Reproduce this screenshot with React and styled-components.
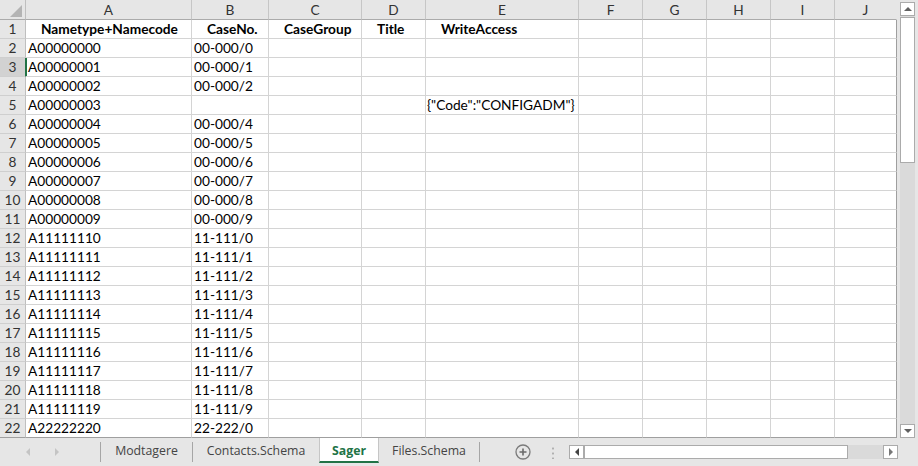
import React from 'react';
import styled, { createGlobalStyle } from 'styled-components';

const GlobalStyle = createGlobalStyle`
  body {
    margin: 0;
    background: #e6e6e6;
    overflow: hidden;
  }
`;

const COLS = [26, 166, 77, 93, 64, 153, 64, 64, 64, 64, 62];
const LETTERS = ['A', 'B', 'C', 'D', 'E', 'F', 'G', 'H', 'I', 'J'];

const HEADERS = ['Nametype+Namecode', 'CaseNo.', 'CaseGroup', 'Title', 'WriteAccess'];

const buildRows = () => {
  const rows = [];
  for (let i = 0; i < 10; i++) {
    rows.push({ a: `A0000000${i}`, b: i === 3 ? '' : `00-000/${i}`, e: i === 3 ? '{"Code":"CONFIGADM"}' : '' });
  }
  for (let i = 0; i < 10; i++) {
    rows.push({ a: `A1111111${i}`, b: `11-111/${i}`, e: '' });
  }
  rows.push({ a: 'A22222220', b: '22-222/0', e: '' });
  return rows;
};

const ROWS = buildRows();

const Window = styled.div`
  width: 918px;
  height: 466px;
  display: flex;
  flex-direction: column;
  background: #e6e6e6;
  overflow: hidden;
`;

const Main = styled.div`
  display: flex;
  height: 438px;
`;

const Sheet = styled.div`
  display: grid;
  grid-template-columns: ${COLS.map(c => `${c}px`).join(' ')};
  grid-template-rows: 20px repeat(22, 19px);
  background: #fff;
`;

const Corner = styled.div`
  box-sizing: border-box;
  background: #e6e6e6;
  border-right: 1px solid #bfbfbf;
  border-bottom: 1px solid #ababab;
  display: flex;
  align-items: flex-end;
  justify-content: flex-end;
  padding: 0 3px 2px 0;
`;

const ColHead = styled.div`
  box-sizing: border-box;
  background: #e6e6e6;
  border-right: 1px solid ${p => (p.$last ? '#e6e6e6' : '#c6c6c6')};
  border-bottom: 1px solid #ababab;
  font: 400 13.7px 'Lato', sans-serif;
  line-height: 19px;
  color: #333;
  text-align: center;
`;

const RowHead = styled.div`
  box-sizing: border-box;
  background: ${p => (p.$sel ? '#d2d2d2' : '#e6e6e6')};
  border-right: 1px solid ${p => (p.$sel ? '#217346' : '#bfbfbf')};
  border-bottom: 1px solid ${p => (p.$bottom ? '#9f9f9f' : '#cfcfcf')};
  font: 400 13.7px 'Lato', sans-serif;
  line-height: 18px;
  color: #333;
  text-align: center;
`;

const Cell = styled.div`
  box-sizing: border-box;
  border-right: 1px solid ${p => (p.$last ? '#9f9f9f' : '#d4d4d4')};
  border-bottom: 1px solid ${p => (p.$bottom ? '#9f9f9f' : '#d4d4d4')};
  box-shadow: ${p => (p.$sel ? 'inset 1px 0 0 #217346' : 'none')};
  padding-left: ${p => p.$indent || 2}px;
  font: ${p => (p.$bold ? 700 : 400)} 13.7px 'Lato', sans-serif;
  line-height: 18px;
  color: #000;
  white-space: nowrap;
`;

const VScroll = styled.div`
  width: 21px;
  box-sizing: border-box;
  padding: 2px 3px 0 3px;
  display: flex;
  flex-direction: column;
`;

const Track = styled.div`
  flex: 1;
  display: flex;
  flex-direction: ${p => (p.$horizontal ? 'row' : 'column')};
  background: #dadada;
`;

const ScrollButton = styled.div`
  box-sizing: border-box;
  width: ${p => (p.$horizontal ? '15px' : '100%')};
  height: ${p => (p.$horizontal ? '100%' : '14px')};
  background: #fff;
  border: 1px solid #ababab;
  display: flex;
  align-items: center;
  justify-content: center;
`;

const Thumb = styled.div`
  box-sizing: border-box;
  background: #fff;
  border: 1px solid #ababab;
  ${p => (p.$horizontal ? 'width: 264px; height: 100%;' : 'height: 146px; margin-top: 1px;')}
`;

const Spacer = styled.div`
  flex: 1;
`;

const Arrow = styled.span`
  width: 0;
  height: 0;
  border-style: solid;
  border-color: transparent;
  ${p => {
    const c = p.$color || '#606060';
    const s = p.$size || 4;
    switch (p.$dir) {
      case 'up':
        return `border-width: 0 ${s}px ${s}px ${s}px; border-bottom-color: ${c};`;
      case 'down':
        return `border-width: ${s}px ${s}px 0 ${s}px; border-top-color: ${c};`;
      case 'left':
        return `border-width: ${s}px ${s}px ${s}px 0; border-right-color: ${c};`;
      default:
        return `border-width: ${s}px 0 ${s}px ${s}px; border-left-color: ${c};`;
    }
  }}
`;

const TabBar = styled.div`
  height: 28px;
  display: flex;
  align-items: flex-start;
  background: #e6e6e6;
`;

const Nav = styled.div`
  width: 100px;
  height: 28px;
  display: flex;
  align-items: center;
  padding-left: 26px;
  gap: 25px;
  box-sizing: border-box;
`;

const Separator = styled.div`
  width: 1px;
  height: 20px;
  margin-top: 4px;
  background: #a6a6a6;
`;

const Tab = styled.div`
  box-sizing: border-box;
  width: ${p => p.$w}px;
  height: 25px;
  padding-top: 2px;
  text-align: center;
  font: ${p => (p.$active ? 700 : 400)} 12.3px 'Open Sans', sans-serif;
  line-height: 21px;
  color: ${p => (p.$active ? '#217346' : '#444')};
  background: ${p => (p.$active ? '#fff' : 'transparent')};
  border-left: ${p => (p.$active ? '1px solid #c6c6c6' : 'none')};
  border-right: ${p => (p.$active ? '1px solid #c6c6c6' : 'none')};
  border-bottom: 2px solid ${p => (p.$active ? '#217346' : 'transparent')};
`;

const AddButton = styled.div`
  margin: 6px 0 0 35px;
  width: 16px;
  height: 16px;
`;

const Dots = styled.div`
  margin: 8px 0 0 21px;
  width: 2px;
  height: 13px;
  background: radial-gradient(circle, #b0b0b0 1px, transparent 1.2px) 0 0 / 2px 5px repeat-y;
`;

const HScroll = styled.div`
  width: 329px;
  height: 14px;
  margin: 7px 0 0 15px;
  display: flex;
`;

const AddIcon = () => (
  <svg width="16" height="16" viewBox="0 0 16 16">
    <circle cx="8" cy="8" r="7" fill="none" stroke="#7a7a7a" strokeWidth="1.3" />
    <path d="M8 4.5v7M4.5 8h7" stroke="#6a6a6a" strokeWidth="1.6" />
  </svg>
);

const CornerMark = () => (
  <svg width="12" height="12" viewBox="0 0 12 12">
    <polygon points="12,0 12,12 0,12" fill="#b4b4b4" />
  </svg>
);

export default function App() {
  return (
    <>
      <GlobalStyle />
      <Window>
        <Main>
          <Sheet>
            <Corner>
              <CornerMark />
            </Corner>
            {LETTERS.map((l, i) => (
              <ColHead key={l} $last={i === LETTERS.length - 1}>{l}</ColHead>
            ))}

            <RowHead>1</RowHead>
            {LETTERS.map((l, i) => (
              <Cell key={l} $bold $indent={15} $last={i === LETTERS.length - 1}>
                {HEADERS[i] || ''}
              </Cell>
            ))}

            {ROWS.map((r, idx) => {
              const n = idx + 2;
              const bottom = n === 22;
              const values = [r.a, r.b, '', '', r.e, '', '', '', '', ''];
              return (
                <React.Fragment key={n}>
                  <RowHead $sel={n === 3} $bottom={bottom}>{n}</RowHead>
                  {values.map((v, i) => (
                    <Cell
                      key={i}
                      $bottom={bottom}
                      $last={i === values.length - 1}
                      $sel={n === 3 && i === 0}
                      $indent={i === 4 ? 1 : 2}
                    >
                      {v}
                    </Cell>
                  ))}
                </React.Fragment>
              );
            })}
          </Sheet>

          <VScroll>
            <Track>
              <ScrollButton>
                <Arrow $dir="up" />
              </ScrollButton>
              <Thumb />
              <Spacer />
              <ScrollButton>
                <Arrow $dir="down" />
              </ScrollButton>
            </Track>
          </VScroll>
        </Main>

        <TabBar>
          <Nav>
            <Arrow $dir="left" $color="#c4c4c4" />
            <Arrow $dir="right" $color="#c4c4c4" />
          </Nav>
          <Separator />
          <Tab $w={91}>Modtagere</Tab>
          <Separator />
          <Tab $w={126}>Contacts.Schema</Tab>
          <Tab $w={60} $active>Sager</Tab>
          <Tab $w={100}>Files.Schema</Tab>
          <Separator />
          <AddButton>
            <AddIcon />
          </AddButton>
          <Dots />
          <HScroll>
            <Track $horizontal>
              <ScrollButton $horizontal>
                <Arrow $dir="left" $size={4} $color="#444" />
              </ScrollButton>
              <Thumb $horizontal />
              <Spacer />
              <ScrollButton $horizontal>
                <Arrow $dir="right" $size={4} $color="#777" />
              </ScrollButton>
            </Track>
          </HScroll>
        </TabBar>
      </Window>
    </>
  );
}
